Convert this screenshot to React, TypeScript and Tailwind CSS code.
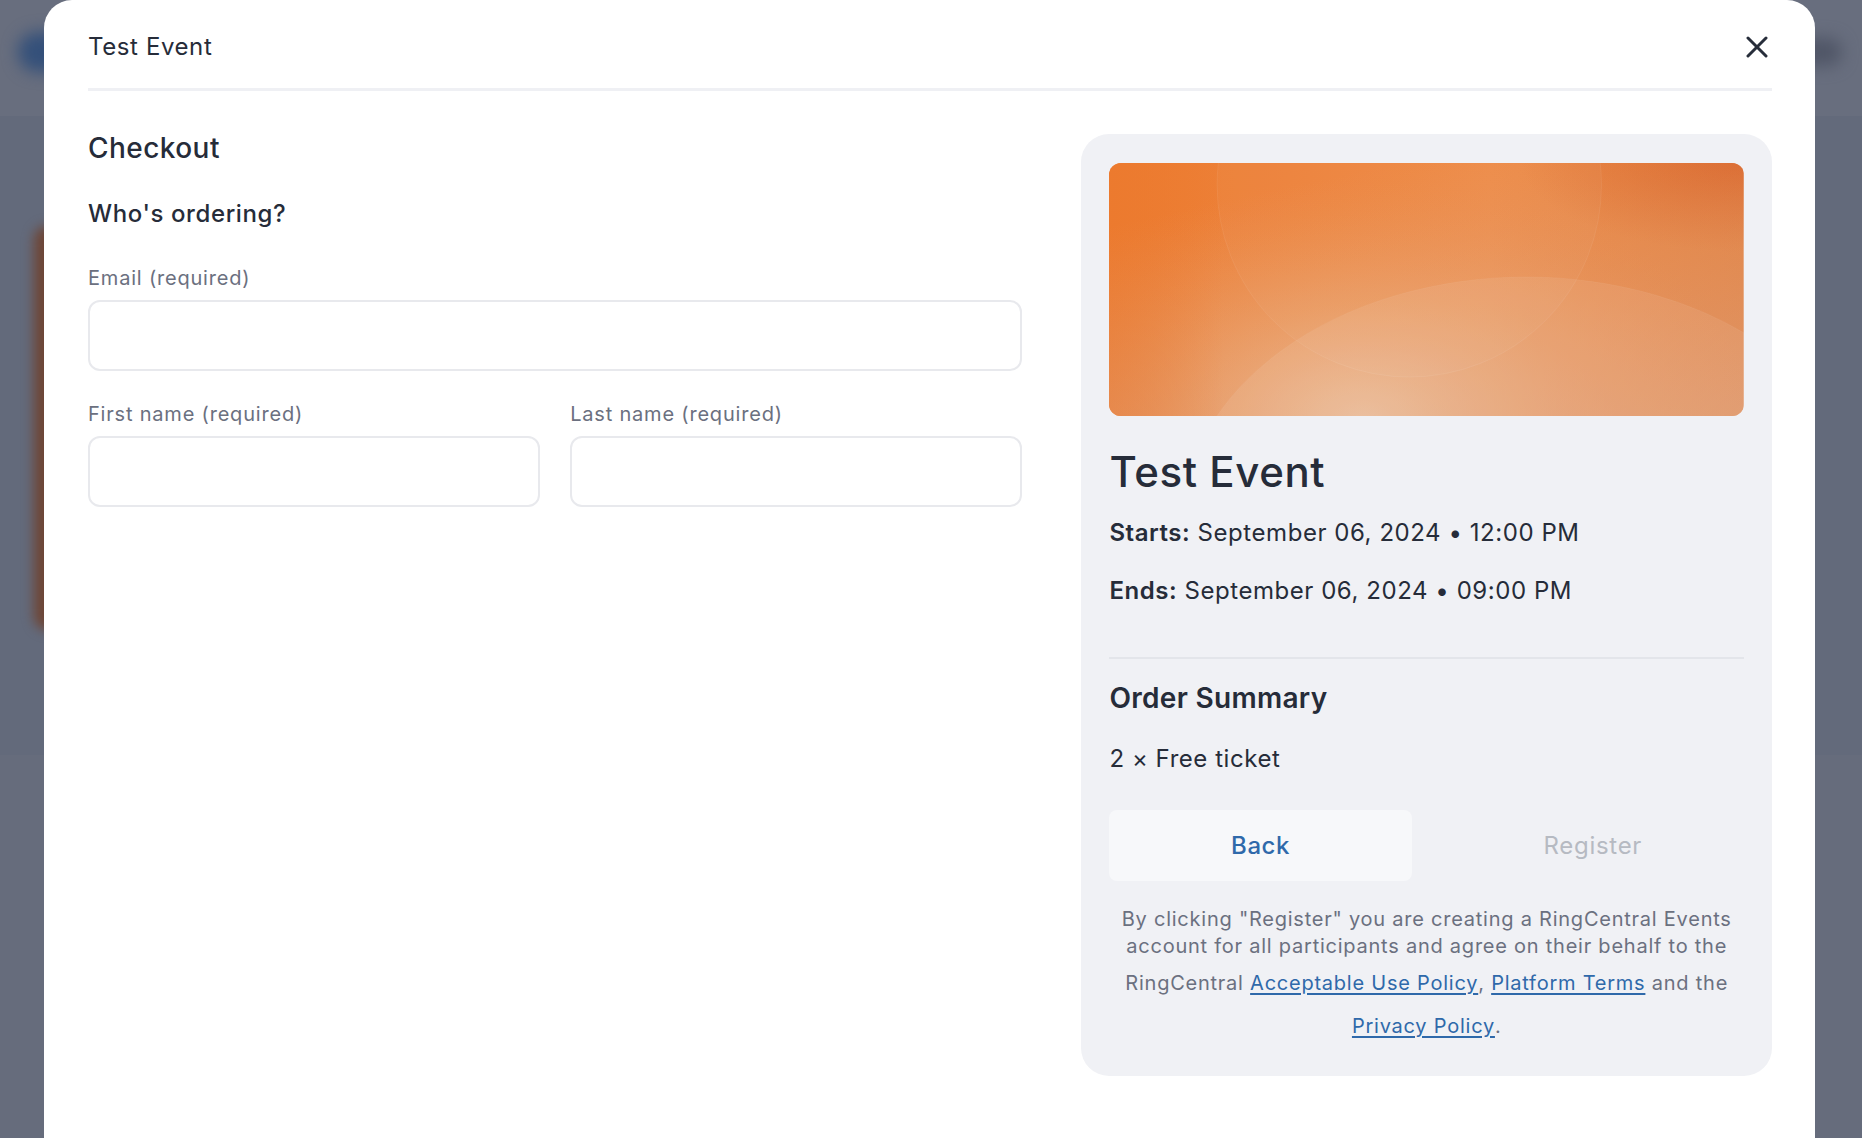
import { useState } from "react";

function EventBanner() {
  return (
    <svg viewBox="0 0 634 253" preserveAspectRatio="none" className="block h-full w-full">
      <defs>
        <linearGradient id="base" x1="0" y1="0" x2="1" y2="0">
          <stop offset="0" stopColor="#ec7b30" />
          <stop offset="0.6" stopColor="#ee8a45" />
          <stop offset="1" stopColor="#e4803c" />
        </linearGradient>
        <radialGradient id="glow" cx="0.4" cy="1.02" r="0.62" gradientTransform="translate(0.4 1.02) scale(1 1.55) translate(-0.4 -1.02)">
          <stop offset="0" stopColor="#f4c8a0" stopOpacity="1" />
          <stop offset="0.5" stopColor="#f0a86f" stopOpacity="0.5" />
          <stop offset="1" stopColor="#ee8a45" stopOpacity="0" />
        </radialGradient>
        <linearGradient id="edge" x1="0" y1="0" x2="1" y2="0">
          <stop offset="0" stopColor="#ec7a2e" stopOpacity="0.85" />
          <stop offset="0.18" stopColor="#ec7a2e" stopOpacity="0" />
        </linearGradient>
        <radialGradient id="corner" cx="1" cy="0" r="0.35">
          <stop offset="0" stopColor="#d95f24" stopOpacity="0.75" />
          <stop offset="1" stopColor="#d95f24" stopOpacity="0" />
        </radialGradient>
        <linearGradient id="fade" x1="0.45" y1="0" x2="1" y2="1">
          <stop offset="0" stopColor="#dba78b" stopOpacity="0" />
          <stop offset="1" stopColor="#dba78b" stopOpacity="0.55" />
        </linearGradient>
      </defs>
      <rect width="634" height="253" fill="url(#base)" />
      <rect width="634" height="253" fill="url(#glow)" />
      <rect width="634" height="253" fill="url(#edge)" />
      <rect width="634" height="253" fill="url(#corner)" />
      <rect width="634" height="253" fill="url(#fade)" />
      <circle cx="300" cy="22" r="192" fill="#ffffff" fillOpacity="0.03" stroke="#ffffff" strokeOpacity="0.07" />
      <ellipse cx="417" cy="364" rx="345" ry="250" fill="#ffffff" fillOpacity="0.08" stroke="#ffffff" strokeOpacity="0.05" />
    </svg>
  );
}

function Field({ label }: { label: string }) {
  const [value, setValue] = useState("");
  return (
    <div className="flex flex-col">
      <label className="text-[20px] leading-[24px] tracking-[0.8px] text-[#6b7080]">{label}</label>
      <input
        value={value}
        onChange={(e) => setValue(e.target.value)}
        className="mt-[10px] h-[71px] w-full rounded-[12px] border-2 border-[#e8e9ed] bg-white px-4 text-[20px] outline-none"
      />
    </div>
  );
}

const linkCls = "inline-block pt-[10px] pb-[6px] text-[#2f69aa] underline underline-offset-[3px]";

export default function App() {
  return (
    <div className="relative h-[1138px] w-full overflow-hidden bg-[#636a7b] font-['Inter',sans-serif] text-[#262c39]">
      {/* blurred page behind the dialog */}
      <div className="absolute left-0 right-0 top-0 h-[116px] bg-[#686e7e]" />
      <div className="absolute bottom-0 left-0 right-0 h-[383px] bg-[#666c7c]" />
      <div className="absolute left-[18px] top-[32px] h-[40px] w-[60px] rounded-full bg-[#34507a] blur-[8px]" />
      <div className="absolute left-[34px] top-[226px] h-[404px] w-[40px] rounded-[14px] bg-[#6e4535] blur-[6px]" />
      <div className="absolute right-[20px] top-[38px] h-[28px] w-[50px] rounded-full bg-[#505667] blur-[8px]" />

      <div className="relative ml-[44px] h-[1220px] w-[1771px] rounded-t-[28px] bg-white px-[44px] pr-[43px]">
        {/* header */}
        <div className="flex h-[88px] items-center justify-between pt-[6px]">
          <h2 className="text-[24px] leading-[30px] font-normal tracking-[0.6px]">Test Event</h2>
          <button type="button" className="mr-[3px] flex h-[24px] w-[24px] items-center justify-center text-[#272d3a]">
            <svg width="22" height="22" viewBox="0 0 22 22" fill="none" stroke="currentColor" strokeWidth="3" strokeLinecap="round">
              <path d="M2 2 20 20" />
              <path d="M20 2 2 20" />
            </svg>
          </button>
        </div>
        <div className="h-[3px] bg-[#eff0f4]" />

        <div className="flex gap-[59px] pt-[43px]">
          {/* left: form */}
          <div className="w-[935px]">
            <h1 className="text-[28px] leading-[28px] font-medium tracking-[0.45px]">Checkout</h1>
            <h3 className="mt-[37px] text-[24px] leading-[30px] font-medium tracking-[0.6px]">Who's ordering?</h3>
            <div className="mt-[37px]">
              <Field label="Email (required)" />
            </div>
            <div className="mt-[31px] grid grid-cols-2 gap-[30px]">
              <Field label="First name (required)" />
              <Field label="Last name (required)" />
            </div>
          </div>

          {/* right: event summary */}
          <div className="h-[942px] w-[691px] rounded-[28px] bg-[#f0f1f5] px-[28px] pt-[29px]">
            <div className="h-[253px] overflow-hidden rounded-[12px]">
              <EventBanner />
            </div>
            <h2 className="mt-[31px] text-[42px] leading-[50px] font-medium tracking-[0.6px]">Test Event</h2>
            <p className="mt-[20px] text-[24px] leading-[32px] tracking-[0.55px]">
              <span className="font-semibold">Starts:</span> September 06, 2024 • 12:00 PM
            </p>
            <p className="mt-[26px] text-[24px] leading-[32px] tracking-[0.55px]">
              <span className="font-semibold">Ends:</span> September 06, 2024 • 09:00 PM
            </p>
            <div className="mt-[50px] h-[2px] bg-[#e3e5ea]" />
            <h3 className="mt-[23px] text-[28px] leading-[32px] font-semibold tracking-[0.3px]">Order Summary</h3>
            <p className="mt-[29px] text-[24px] leading-[32px] tracking-[0.55px]">2 × Free ticket</p>

            <div className="mt-[35px] grid grid-cols-2 gap-[30px]">
              <button type="button" className="h-[71px] rounded-[8px] bg-[#f7f8fa] text-[24px] font-medium tracking-[0.6px] text-[#2f69aa]">
                Back
              </button>
              <button type="button" disabled className="h-[71px] rounded-[8px] text-[24px] tracking-[0.7px] text-[#b6bac2]">
                Register
              </button>
            </div>

            <p className="mt-[25px] text-center text-[20px] leading-[27px] tracking-[0.76px] text-[#6b7080]">
              By clicking "Register" you are creating a RingCentral Events
              <br />
              account for all participants and agree on their behalf to the
              <br />
              RingCentral{" "}
              <a href="#" className={linkCls}>
                Acceptable Use Policy
              </a>
              ,{" "}
              <a href="#" className={linkCls}>
                Platform Terms
              </a>{" "}
              and the
              <br />
              <a href="#" className={linkCls}>
                Privacy Policy
              </a>
              .
            </p>
          </div>
        </div>
      </div>
    </div>
  );
}
